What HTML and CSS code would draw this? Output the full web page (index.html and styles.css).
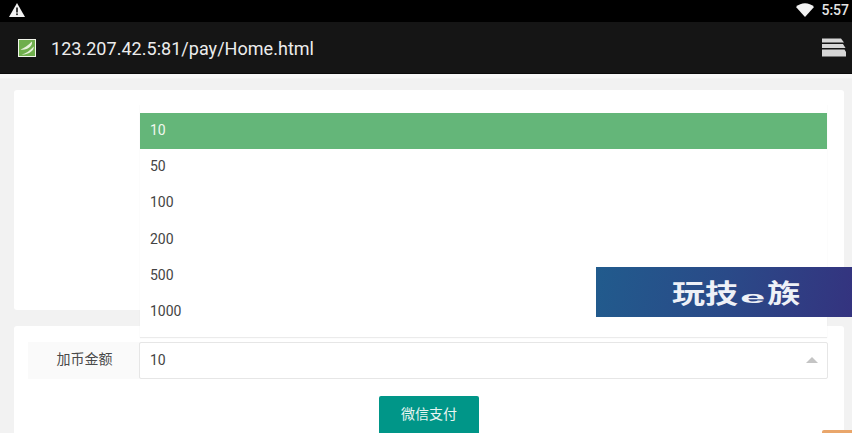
FILE: index.html
```html
<!DOCTYPE html>
<html lang="zh">
<head>
<meta charset="utf-8">
<title>Home</title>
<link rel="stylesheet" href="styles.css">
</head>
<body>
<div class="screen">
  <header class="status">
    <svg class="warn" width="16" height="14" viewBox="0 0 16 14"><path fill="#f2f2f2" d="M8 0 16 14H0Z"/><rect x="7.200" y="4.500" width="1.600" height="5" fill="#111"/><rect x="7.200" y="10.400" width="1.600" height="1.700" fill="#111"/></svg>
    <div class="status-right">
      <svg class="wifi" width="18" height="14" viewBox="0 0 18 14"><path fill="#f2f2f2" d="M0 4C5-1 13-1 18 4L9 14Z"/></svg>
      <span class="clock">5:57</span>
    </div>
  </header>
  <nav class="toolbar">
    <svg class="favicon" width="18" height="18" viewBox="0 0 18 18"><rect width="18" height="18" fill="#f1f5ea"/><rect x="1" y="1" width="16" height="16" fill="#6fae4c"/><path fill="#e6f1da" d="M2.500 10.500C6 9 10 6.500 14 2.500 14.500 6 12 8.500 8.500 10 6.500 10.800 4.500 11 2.500 10.500ZM3.500 15.500C8 14.500 12 11.500 15.800 7.500 16 10.500 13.500 13 10.500 14.300 8 15.300 5.500 15.800 3.500 15.500Z"/></svg>
    <span class="url">123.207.42.5:81/pay/Home.html</span>
    <svg class="tabs" width="24" height="19" viewBox="0 0 24 19"><path fill="#d6d6d6" d="M0 0.500H19L22 4.500H0ZM0 6H21L23.500 10H0ZM0 11.500H22.500L24 14V18.500H0Z"/></svg>
  </nav>
  <main class="page">
    <section class="card card-top"></section>
    <section class="card card-form">
      <div class="field">
        <label class="field-label">加币金额</label>
        <div class="select"><span>10</span><i class="caret"></i></div>
      </div>
      <div class="actions"><button class="pay">微信支付</button></div>
    </section>
    <ul class="dropdown">
      <li class="selected">10</li>
      <li>50</li>
      <li>100</li>
      <li>200</li>
      <li>500</li>
      <li>1000</li>
    </ul>
    <aside class="banner"><span class="banner-text">玩技<small>e</small>族</span></aside>
    <div class="corner"></div>
  </main>
</div>
</body>
</html>
```
FILE: styles.css
```css
* { box-sizing: border-box; }
html, body { margin: 0; padding: 0; }
body { font-family: Roboto, "Noto Sans CJK SC", sans-serif; background: #f2f2f2; }
.screen { width: 852px; height: 433px; overflow: hidden; display: flex; flex-direction: column; }
.status { height: 22px; background: #000; display: flex; justify-content: space-between; align-items: center; padding: 0 3px 2px 9px; flex: none; }
.status-right { display: flex; align-items: center; gap: 7px; }
.clock { color: #e4e4e4; font-size: 14px; font-weight: 500; }
.toolbar { height: 52px; background: #151515; display: flex; align-items: center; padding: 0 6px 0 18px; border-bottom: 1px solid #0a0a0a; flex: none; }
.favicon { flex: none; }
.url { color: #ececec; font-size: 18px; margin-left: 15px; flex: 1; letter-spacing: 0.03px; padding-top: 2px; }
.tabs { flex: none; }
.page { position: relative; flex: 1; background: linear-gradient(#f7f7f7 0, #f7f7f7 4px, #eeeeee 5px, #f2f2f2 6px); padding: 16px 8px 0 14px; display: flex; flex-direction: column; gap: 16px; }
.card { background: #fff; border-radius: 3px; flex: none; }
.card-top { height: 220px; }
.card-form { height: 130px; padding: 16px 16px 0 14px; }
.field { display: flex; height: 37px; }
.field-label { width: 112px; background: #fafafa; color: #4a4a4a; font-size: 14px; display: flex; align-items: center; justify-content: center; padding: 0 0 5px 1px; }
.select { flex: 1; border: 1px solid #e6e6e6; border-radius: 2px; color: #444; font-size: 14px; display: flex; align-items: center; justify-content: space-between; padding: 0 10px 1px 10px; margin-left: -1px; }
.caret { width: 0; height: 0; border-left: 6px solid transparent; border-right: 6px solid transparent; border-bottom: 6px solid #c4c4c4; margin-right: -1px; }
.actions { display: flex; justify-content: center; margin-top: 17px; }
.pay { width: 100px; height: 42px; border: 0; border-radius: 2px; background: #009688; color: #e8f5f2; font-size: 14px; font-family: inherit; padding: 0 0 8px; margin-left: 2px; }
.dropdown { position: absolute; left: 140px; top: 30px; width: 687px; height: 233px; margin: 0; padding: 9px 0 0; list-style: none; background: #fff; box-shadow: 0 1px 1px rgba(0,0,0,.08); }
.dropdown li { height: 36.200px; line-height: 35px; padding: 0 10px; font-size: 14px; color: #444; }
.dropdown .selected { background: #64b679; color: #f1f8ef; }
.banner { position: absolute; left: 596px; top: 193px; width: 256px; height: 50px; background: linear-gradient(100deg, #215b8d 0%, #2a4a88 50%, #34337f 100%); display: flex; align-items: center; padding-left: 76px; }
.banner-text { color: #eef1f7; font-size: 26px; line-height: 1; font-weight: 700; font-family: "Noto Sans CJK SC", sans-serif; transform: scaleX(1.27); transform-origin: left center; white-space: nowrap; }
.banner-text small { display: inline-block; width: 23px; text-align: center; font-size: 17px; font-family: "Liberation Sans", sans-serif; transform: scaleX(2.1); }
.corner { position: absolute; left: 822px; top: 356px; width: 30px; height: 3px; background: #e9a66b; border-radius: 2px 0 0 0; }
```
